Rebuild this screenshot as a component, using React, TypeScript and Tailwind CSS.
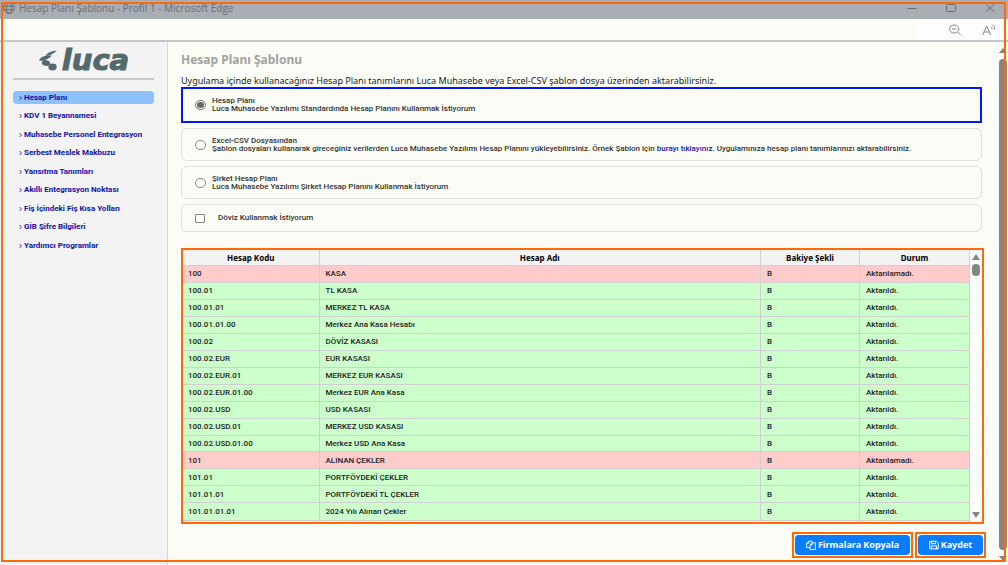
import type { ReactNode } from "react";

const menuItems = [
  "Hesap Planı",
  "KDV 1 Beyannamesi",
  "Muhasebe Personel Entegrasyon",
  "Serbest Meslek Makbuzu",
  "Yansıtma Tanımları",
  "Akıllı Entegrasyon Noktası",
  "Fiş İçindeki Fiş Kısa Yolları",
  "GİB Şifre Bilgileri",
  "Yardımcı Programlar",
];

const accounts = [
  { code: "100", name: "KASA", ok: false },
  { code: "100.01", name: "TL KASA", ok: true },
  { code: "100.01.01", name: "MERKEZ TL KASA", ok: true },
  { code: "100.01.01.00", name: "Merkez Ana Kasa Hesabı", ok: true },
  { code: "100.02", name: "DÖVİZ KASASI", ok: true },
  { code: "100.02.EUR", name: "EUR KASASI", ok: true },
  { code: "100.02.EUR.01", name: "MERKEZ EUR KASASI", ok: true },
  { code: "100.02.EUR.01.00", name: "Merkez EUR Ana Kasa", ok: true },
  { code: "100.02.USD", name: "USD KASASI", ok: true },
  { code: "100.02.USD.01", name: "MERKEZ USD KASASI", ok: true },
  { code: "100.02.USD.01.00", name: "Merkez USD Ana Kasa", ok: true },
  { code: "101", name: "ALINAN ÇEKLER", ok: false },
  { code: "101.01", name: "PORTFÖYDEKİ ÇEKLER", ok: true },
  { code: "101.01.01", name: "PORTFÖYDEKİ TL ÇEKLER", ok: true },
  { code: "101.01.01.01", name: "2024 Yılı Alınan Çekler", ok: true },
];

const TitleBar = () => (
  <header className="flex h-[19px] items-center bg-[#a9adb4] pb-[3px] pl-[3px] text-[#6a6d72]">
    <svg className="h-3 w-3" viewBox="0 0 12 12" fill="none" stroke="currentColor">
      <circle cx="6" cy="6" r="5.4" />
      <ellipse cx="6" cy="6" rx="2.5" ry="5.4" />
      <path d="M.8 4.2h10.4M.8 7.8h10.4" />
    </svg>
    <h1 className="ml-1 flex-1 font-['Open_Sans',sans-serif] text-[10px] leading-4">
      Hesap Planı Şablonu - Profil 1 - Microsoft Edge
    </h1>
    <div className="flex gap-[29px] pr-[13px]">
      <button aria-label="Simge durumuna küçült">
        <svg className="h-2.5 w-2.5" viewBox="0 0 10 10" fill="none" stroke="currentColor">
          <path d="M.5 5.5h9" />
        </svg>
      </button>
      <button aria-label="Ekranı kapla">
        <svg className="h-2.5 w-2.5" viewBox="0 0 10 10" fill="none" stroke="currentColor">
          <rect x=".5" y="1.5" width="9" height="7" rx="1" />
        </svg>
      </button>
      <button aria-label="Kapat">
        <svg className="h-2.5 w-2.5" viewBox="0 0 10 10" fill="none" stroke="currentColor">
          <path d="M1 1.500l8 7M9 1.500l-8 7" />
        </svg>
      </button>
    </div>
  </header>
);

const AddressBar = () => (
  <div className="flex h-[23px] items-center justify-end border-b-2 border-[#c4c5c8] bg-[#fbfcf6] text-[#85878a]">
    <div className="flex h-full items-center gap-[21px] bg-[#fdfdfd] pl-8 pr-3">
      <button aria-label="Uzaklaştır">
        <svg className="h-3 w-3" viewBox="0 0 12 12" fill="none" stroke="currentColor">
          <ellipse cx="5.2" cy="5" rx="4.6" ry="4" />
          <path d="M3 5h4.400M8.600 7.800l3 2.800" />
        </svg>
      </button>
      <button aria-label="Sesli oku">
        <svg className="h-3 w-3.5" viewBox="0 0 14 12" fill="none" stroke="currentColor">
          <path d="M.7 11L4.700 2l4 9M2.100 8h5.200M9 2.600q1.300 1 1.100 2.800M10.300 .7q3.200 2 2.400 5" />
        </svg>
      </button>
    </div>
  </div>
);

const Logo = () => (
  <div className="flex items-center justify-center gap-1 text-[#54696d]">
    <svg className="h-[21px] w-5" viewBox="0 0 20 21" fill="currentColor">
      <path d="M19 .8C13.500 .8 9 2.800 7.600 5.800C11 6.200 14.500 4.200 19 .8Z" />
      <path d="M14 5.800C8 4.800 2.500 7 1 10.400C5 11.800 10 9.500 14 5.800Z" />
      <ellipse cx="8" cy="13" rx="4.2" ry="2.8" transform="rotate(12 8 13)" />
      <ellipse cx="14.500" cy="17" rx="4.2" ry="3.4" />
    </svg>
    <span className="font-['DejaVu_Sans',sans-serif] text-[29px] font-bold italic leading-8 [-webkit-text-stroke:1px]">
      luca
    </span>
  </div>
);

const Sidebar = () => (
  <aside className="w-[168px] shrink-0 border-r border-[#d5d6d8] bg-[#f3f3f3] px-[13px] pt-0.5">
    <Logo />
    <hr className="mt-0.5 border-t-2 border-[#c8c8c8]" />
    <nav className="mt-[11px] flex h-[161px] flex-col justify-between">
      {menuItems.map((item, i) => (
        <a
          key={item}
          href="#"
          className={`flex h-[13px] items-center whitespace-nowrap rounded-sm pl-1.5 font-['Roboto',sans-serif] text-[8px] font-bold text-[#1212a5] ${
            i === 0 ? "bg-[#8ec1ff]" : ""
          }`}
        >
          <svg className="mr-0.5 h-1.5 w-[3px]" viewBox="0 0 3 6" fill="none" stroke="currentColor" strokeWidth=".8">
            <path d="M.5 1l2 2-2 2" />
          </svg>
          {item}
        </a>
      ))}
    </nav>
  </aside>
);

type OptionProps = { title: string; checked?: boolean; children: ReactNode };

const Option = ({ title, checked, children }: OptionProps) => (
  <label
    className={`flex items-center gap-1.5 font-['Roboto',sans-serif] text-[8px] font-medium leading-2 text-[#333] ${
      checked ? "h-9 border-2 border-[#0018f5] pl-3" : "h-[33px] rounded-md border border-[#dedfda] pl-[13px]"
    }`}
  >
    <input
      type="radio"
      name="plan"
      defaultChecked={checked}
      className="h-2.5 w-[11px] shrink-0 appearance-none rounded-full border border-[#858585] bg-white checked:bg-[#666] checked:shadow-[inset_0_0_0_1px_white]"
    />
    <span>
      <span className="block">{title}</span>
      <span className="block">{children}</span>
    </span>
  </label>
);

const AccountTable = () => (
  <div className="flex h-[276px] overflow-hidden border-2 border-[#ff6a08] bg-[#fdfdfd]">
    <div className="flex-1 overflow-hidden">
      <table className="h-[286px] w-full table-fixed border-collapse font-['Roboto',sans-serif] text-[8px] font-medium leading-[15px] text-[#222]">
        <thead className="bg-[#f3f3f3] font-['Noto_Sans',sans-serif] text-black">
          <tr>
            <th className="w-[136px] border-b border-r border-[#d0d0d0] p-0">Hesap Kodu</th>
            <th className="border-b border-r border-[#d0d0d0] p-0">Hesap Adı</th>
            <th className="w-[99px] border-b border-r border-[#d0d0d0] p-0">Bakiye Şekli</th>
            <th className="w-[110px] border-b border-r border-[#d0d0d0] p-0">Durum</th>
          </tr>
        </thead>
        <tbody>
          {accounts.map((row) => (
            <tr key={row.code} className={row.ok ? "bg-[#ccffcc]" : "bg-[#ffcccc]"}>
              <td className="border-b border-r border-[#d0d0d0] p-0 pl-[5px]">{row.code}</td>
              <td className="border-b border-r border-[#d0d0d0] p-0 pl-1.5">{row.name}</td>
              <td className="border-b border-r border-[#d0d0d0] p-0 pl-1.5">B</td>
              <td className="border-b border-r border-[#d0d0d0] p-0 pl-1.5">
                {row.ok ? "Aktarıldı." : "Aktarılamadı."}
              </td>
            </tr>
          ))}
          <tr className="h-4 bg-[#ccffcc]">
            <td className="border-r border-[#d0d0d0]" />
            <td className="border-r border-[#d0d0d0]" />
            <td className="border-r border-[#d0d0d0]" />
            <td className="border-r border-[#d0d0d0]" />
          </tr>
        </tbody>
      </table>
    </div>
    <div className="flex w-3 flex-col items-center justify-between py-1 text-[#858585]">
      <div className="flex flex-col items-center gap-1">
        <svg className="h-1.5 w-2" viewBox="0 0 8 6" fill="currentColor">
          <path d="M4 0L8 6H0z" />
        </svg>
        <div className="h-3 w-2 rounded-full bg-[#858585]" />
      </div>
      <svg className="h-1.5 w-2" viewBox="0 0 8 6" fill="currentColor">
        <path d="M4 6L8 0H0z" />
      </svg>
    </div>
  </div>
);

const CopyIcon = () => (
  <svg className="h-2.5 w-2.5" viewBox="0 0 10 10" fill="none" stroke="currentColor" strokeWidth=".9">
    <path d="M4 7.500H.6V3.200L3 1h3v2M3 1v2.200H.6" />
    <path d="M4 5l2.200-2.200h3.200v6.700H4zM6.200 2.800V5H4" />
  </svg>
);

const SaveIcon = () => (
  <svg className="h-2.5 w-2.5" viewBox="0 0 10 10" fill="none" stroke="currentColor">
    <path d="M.8 1.200h6.700L9.200 2.900v6H.8z" />
    <path d="M2.700 1.200v2.500h3.800V1.200M2.500 8.800V5.900h5v2.900" />
  </svg>
);

const App = () => {
  return (
    <div className="relative flex h-screen flex-col overflow-hidden bg-[#fbfcf6] font-['Noto_Sans','Open_Sans',sans-serif]">
      <TitleBar />
      <AddressBar />
      <div className="flex min-h-0 flex-1">
        <Sidebar />
        <main className="min-w-0 flex-1 pl-[13px] pr-3 pt-2.5">
          <h2 className="text-[12px] font-bold leading-4 text-[#a2a2a0]">Hesap Planı Şablonu</h2>
          <p className="mt-[7px] text-[9px] leading-3 text-[#222]">
            Uygulama içinde kullanacağınız Hesap Planı tanımlarını Luca Muhasebe veya Excel-CSV şablon dosya üzerinden
            aktarabilirsiniz.
          </p>
          <div className="flex flex-col gap-[5px] pr-1">
            <Option title="Hesap Planı" checked>
              Luca Muhasebe Yazılımı Standardında Hesap Planını Kullanmak İstiyorum
            </Option>
            <Option title="Excel-CSV Dosyasından">
              Şablon dosyaları kullanarak gireceğiniz verilerden Luca Muhasebe Yazılımı Hesap Planını yükleyebilirsiniz.
              Örnek Şablon için{" "}
              <a href="#" className="text-[#1616b5]">
                burayı tıklayınız
              </a>
              . Uygulamınıza hesap planı tanımlarınızı aktarabilirsiniz.
            </Option>
            <Option title="Şirket Hesap Planı">
              Luca Muhasebe Yazılımı Şirket Hesap Planını Kullanmak İstiyorum
            </Option>
            <label className="flex h-7 items-center gap-[13px] rounded-md border border-[#dedfda] pl-[13px] font-['Roboto',sans-serif] text-[8px] font-medium text-[#333]">
              <input
                type="checkbox"
                className="h-[9px] w-2.5 appearance-none rounded-[1px] border border-[#858585] bg-white"
              />
              Döviz Kullanmak İstiyorum
            </label>
          </div>
          <div className="mt-4 pr-0.5">
            <AccountTable />
          </div>
          <div className="mt-2 flex justify-end gap-0.5">
            <div className="border-2 border-[#ff6a08] p-px">
              <button className="flex h-5 w-[115px] items-center justify-center gap-0.5 rounded-sm bg-[#0a7cff] text-[9px] font-bold text-white">
                <CopyIcon />
                Firmalara Kopyala
              </button>
            </div>
            <div className="border-2 border-[#ff6a08] p-px">
              <button className="flex h-5 w-[65px] items-center justify-center gap-0.5 rounded-sm bg-[#0a7cff] text-[9px] font-bold text-white">
                <SaveIcon />
                Kaydet
              </button>
            </div>
          </div>
        </main>
        <div className="flex w-[10px] shrink-0 flex-col items-center gap-1.5 overflow-hidden pt-1.5 text-[#858585]">
          <svg className="h-[5px] w-2" viewBox="0 0 8 5" fill="currentColor">
            <path d="M4 0L8 5H0z" />
          </svg>
          <div className="w-2 flex-1 rounded-full bg-[#858585]" />
          <svg className="mb-1 h-[5px] w-2" viewBox="0 0 8 5" fill="currentColor">
            <path d="M4 5L8 0H0z" />
          </svg>
        </div>
      </div>
      {/* highlight frame round the whole window */}
      <div className="pointer-events-none absolute inset-x-px bottom-[3px] top-0.5 mr-px border-2 border-[#ff6a08]" />
    </div>
  );
};

export default App;
